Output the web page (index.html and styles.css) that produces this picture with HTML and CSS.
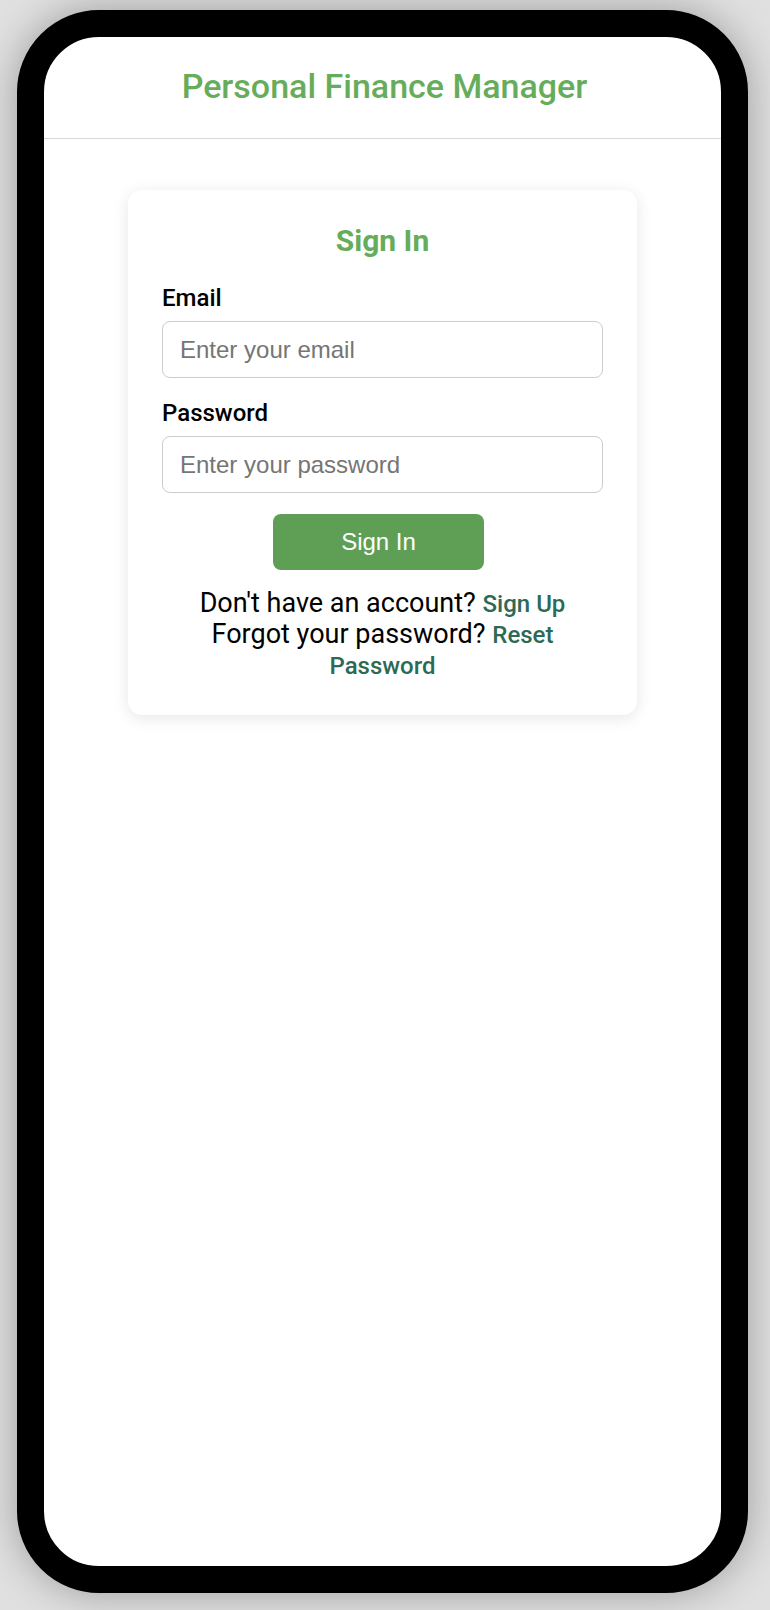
FILE: index.html
```html
<!DOCTYPE html>
<html lang="en">
<head>
<meta charset="utf-8">
<meta name="viewport" content="width=device-width, initial-scale=1">
<title>Personal Finance Manager</title>
<link rel="stylesheet" href="styles.css">
</head>
<body>
<div class="phone">
  <header class="app-header">
    <h1 class="app-title">Personal Finance Manager</h1>
  </header>
  <main class="app-main">
    <form class="card">
      <h2 class="card-title">Sign In</h2>
      <div class="field">
        <label class="field-label" for="email">Email</label>
        <input class="field-input" id="email" type="email" placeholder="Enter your email">
      </div>
      <div class="field">
        <label class="field-label" for="password">Password</label>
        <input class="field-input" id="password" type="password" placeholder="Enter your password">
      </div>
      <button class="submit" type="submit">Sign In</button>
      <div class="links">
        <p class="prompt">Don't have an account? <a class="link" href="#signup">Sign Up</a></p>
        <p class="prompt">Forgot your password? <a class="link" href="#reset">Reset Password</a></p>
      </div>
    </form>
  </main>
</div>
</body>
</html>
```

FILE: styles.css
```css
* {
  box-sizing: border-box;
}

body {
  margin: 0;
  min-height: 100vh;
  padding: 10px 22px 17px 17px;
  display: flex;
  background: #e0e0e0;
  font-family: Roboto, "Liberation Sans", sans-serif;
  color: #000;
}

.phone {
  flex: 1;
  min-width: 0;
  border: 27px solid #000;
  border-radius: 82px;
  background: #fff;
  box-shadow: 0 0 40px rgba(0, 0, 0, 0.3);
  overflow: hidden;
}

.app-header {
  padding: 29px 0 32px 4px;
  border-bottom: 1px solid #d8d8d8;
  text-align: center;
}

.app-title {
  margin: 0;
  font-size: 34px;
  line-height: 40px;
  font-weight: 500;
  color: #66ad5b;
}

.app-main {
  padding: 51px 84px;
}

.card {
  display: flex;
  flex-direction: column;
  padding: 34px;
  border-radius: 14px;
  background: #fff;
  box-shadow: 0 3px 16px rgba(0, 0, 0, 0.1);
}

.card-title {
  margin: 0 0 26px;
  font-size: 30px;
  line-height: 34px;
  font-weight: 700;
  text-align: center;
  color: #66ad5b;
}

.field {
  margin-bottom: 21px;
}

.field-label {
  display: block;
  margin-bottom: 8px;
  font-size: 24px;
  line-height: 29px;
  font-weight: 500;
}

.field-input {
  display: block;
  width: 100%;
  height: 57px;
  padding: 0 17px;
  border: 1px solid #ccc;
  border-radius: 8px;
  background: #fff;
  font-family: "Liberation Sans", Arial, sans-serif;
  font-size: 24px;
  color: #000;
}

.field-input::placeholder {
  color: #757575;
}

.submit {
  align-self: center;
  width: 48%;
  height: 56px;
  margin-right: 8px;
  border: 0;
  border-radius: 8px;
  background: #5f9f55;
  color: #fff;
  font-family: "Liberation Sans", Arial, sans-serif;
  font-size: 24px;
}

.links {
  margin-top: 18px;
  padding: 0 34px;
}

.prompt {
  margin: 0;
  font-size: 27px;
  line-height: 32px;
  text-align: center;
}

.link {
  font-size: 24px;
  line-height: 28px;
  font-weight: 500;
  color: #2d6a56;
  text-decoration: none;
}

.links .prompt {
  line-height: 31px;
}
```
